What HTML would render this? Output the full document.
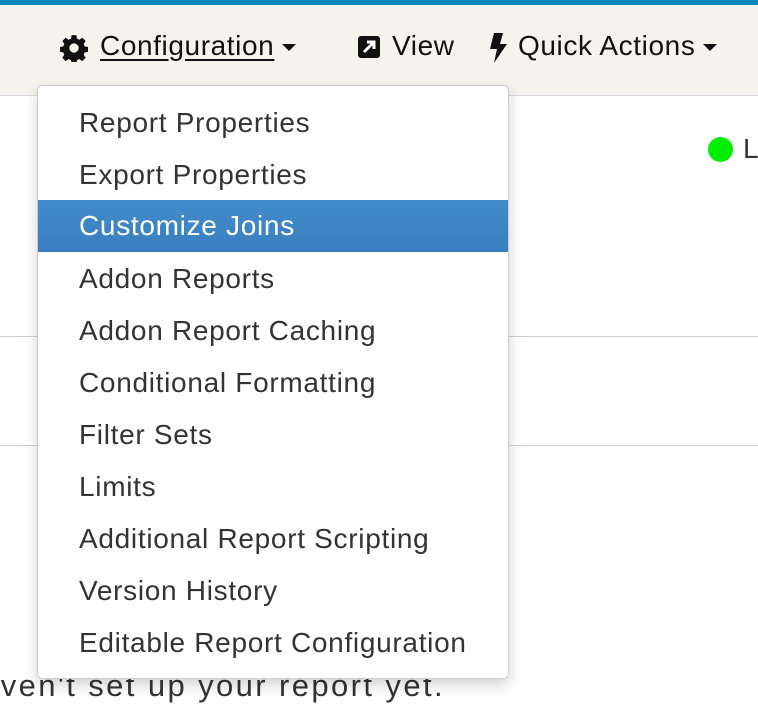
<!DOCTYPE html>
<html><head><style>
body{margin:0;width:758px;height:716px;overflow:hidden;background:#fff;font-family:"Liberation Sans",sans-serif;position:relative;color:#333}
.top{position:absolute;left:0;top:0;width:758px;height:5px;background:#0a86b8}
.nav{position:absolute;left:0;top:5px;width:758px;height:90px;background:#f6f3ed;border-bottom:1px solid #d8d8d8}
.nav span{position:absolute;top:25px;font-size:28px;letter-spacing:0.6px;color:#111;white-space:nowrap}
.line{position:absolute;left:0;width:758px;height:1px;background:#d0d0d0}
.menu{position:absolute;left:37px;top:85px;width:470px;height:592px;background:#fff;border:1px solid #ccc;border-radius:5px;box-shadow:0 6px 14px rgba(0,0,0,.18)}
.item{position:absolute;left:0;width:470px;height:52px;line-height:52px;padding-left:41px;box-sizing:border-box;font-size:28px;letter-spacing:0.7px;color:#333;white-space:nowrap}
.hl{background:linear-gradient(#428bca,#3a7fc0);color:#fff}
.car{display:inline-block;width:0;height:0;border-left:7px solid transparent;border-right:7px solid transparent;border-top:7px solid #111;vertical-align:middle;margin-left:8px}
</style></head><body>
<div class="top"></div>
<div class="nav">
<svg style="position:absolute;left:60px;top:29px" width="28" height="28" viewBox="0 0 24 24"><path fill="#111" d="M10 1h4l.6 3 2 .9 2.6-1.7 2.8 2.8-1.7 2.6.9 2 3 .6v4l-3 .6-.9 2 1.7 2.6-2.8 2.8-2.6-1.7-2 .9-.6 3h-4l-.6-3-2-.9-2.6 1.7-2.8-2.8 1.7-2.6-.9-2-3-.6v-4l3-.6.9-2-1.7-2.6 2.8-2.8 2.6 1.7 2-.9zM12 8a4 4 0 100 8 4 4 0 000-8z"/></svg>
<span style="left:100px;text-decoration:underline;text-underline-offset:4px">Configuration<i class="car"></i></span>
<svg style="position:absolute;left:357px;top:30px" width="24" height="24" viewBox="0 0 24 24"><rect x="1" y="1" width="22" height="22" rx="3" fill="#111"/><path d="M7 17L16 8M10 7h7v7" stroke="#fff" stroke-width="3" fill="none"/></svg>
<span style="left:392px">View</span>
<svg style="position:absolute;left:488px;top:27px" width="20" height="32" viewBox="0 0 20 32"><path fill="#111" d="M6 1h9l-3 11h7L6 31l3-14H2z"/></svg>
<span style="left:518px">Quick Actions<i class="car"></i></span>
</div>
<div style="position:absolute;left:708px;top:137px;width:25px;height:25px;border-radius:50%;background:#00ee00"></div>
<div style="position:absolute;left:743px;top:133px;font-size:28px;color:#333">L</div>
<div class="line" style="top:336px"></div>
<div class="line" style="top:445px"></div>
<div style="position:absolute;right:313px;top:668px;font-size:31px;letter-spacing:2.4px;color:#333;white-space:nowrap;text-align:right">haven't set up your report yet.</div>
<div class="menu">
<div class="item" style="top:11px">Report Properties</div>
<div class="item" style="top:63px">Export Properties</div>
<div class="item hl" style="top:114px">Customize Joins</div>
<div class="item" style="top:167px">Addon Reports</div>
<div class="item" style="top:219px">Addon Report Caching</div>
<div class="item" style="top:271px">Conditional Formatting</div>
<div class="item" style="top:323px">Filter Sets</div>
<div class="item" style="top:375px">Limits</div>
<div class="item" style="top:427px">Additional Report Scripting</div>
<div class="item" style="top:479px">Version History</div>
<div class="item" style="top:531px">Editable Report Configuration</div>
</div>
</body></html>
